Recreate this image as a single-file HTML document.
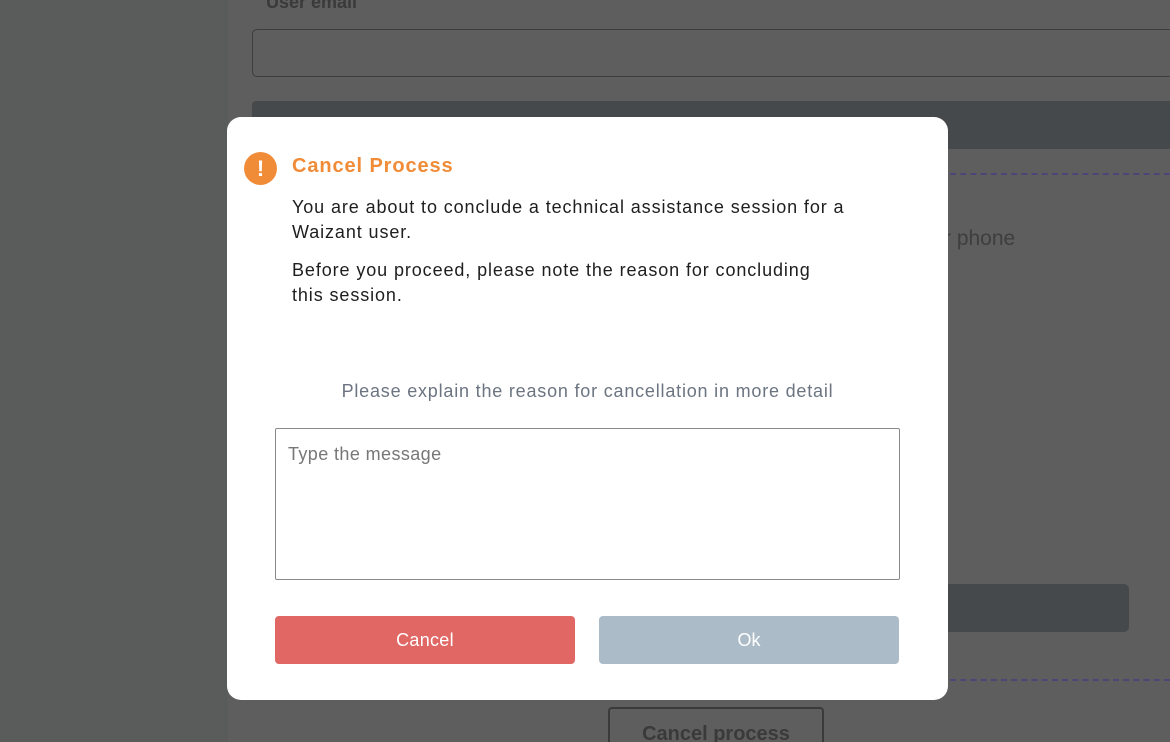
<!DOCTYPE html>
<html><head><meta charset="utf-8"><style>
*{margin:0;padding:0;box-sizing:border-box}
html,body{width:1170px;height:742px;overflow:hidden}
body{background:#5e5e5e;font-family:"Liberation Sans",sans-serif;position:relative}
.left{position:absolute;left:0;top:0;width:228px;height:742px;background:#5a5b5b}
.abs{position:absolute;white-space:nowrap}
.t{font-size:18px;letter-spacing:0.9px;line-height:25px;color:#1e1e1e}
</style></head><body>
<div class="left"></div>
<div class="abs" style="left:266px;top:-8px;font-size:18px;font-weight:bold;color:#3a3a3a">User email</div>
<div class="abs" style="left:252px;top:29px;width:940px;height:48px;border:1px solid #3d3d3d;border-radius:5px"></div>
<div class="abs" style="left:252px;top:101px;width:940px;height:48px;background:#46494b;border-radius:4px"></div>
<div class="abs" style="left:940px;top:173px;width:240px;border-top:2px dashed #4b4578"></div>
<div class="abs" style="left:944px;top:227px;font-size:21px;color:#3e3e3e">r phone</div>
<div class="abs" style="left:940px;top:584px;width:189px;height:48px;background:#46494b;border-radius:5px"></div>
<div class="abs" style="left:940px;top:679px;width:240px;border-top:2px dashed #4b4578"></div>
<div class="abs" style="left:608px;top:707px;width:216px;height:50px;border:2px solid #3a3a3a;border-radius:4px;font-size:20px;font-weight:bold;color:#3a3a3a;text-align:center;padding-top:14px">Cancel process</div>

<div class="abs" style="left:227px;top:117px;width:721px;height:583px;background:#fff;border-radius:14px">
  <div class="abs" style="left:17px;top:35px;width:33px;height:33px;border-radius:50%;background:#f08c38;color:#fff;font-weight:bold;font-size:22px;text-align:center;line-height:33px">!</div>
  <div class="abs" style="left:65px;top:38px;font-size:20px;letter-spacing:0.9px;font-weight:bold;color:#f08c38">Cancel Process</div>
  <div class="abs t" style="left:65px;top:78px">You are about to conclude a technical assistance session for a<br>Waizant user.</div>
  <div class="abs t" style="left:65px;top:141px">Before you proceed, please note the reason for concluding<br>this session.</div>
  <div class="abs" style="left:0;top:264px;width:721px;text-align:center;font-size:18px;letter-spacing:0.8px;color:#6b7480">Please explain the reason for cancellation in more detail</div>
  <div class="abs" style="left:48px;top:311px;width:625px;height:152px;border:1px solid #8a8a8a;border-radius:2px;padding:15px 12px;font-size:18px;letter-spacing:0.4px;color:#777">Type the message</div>
  <div class="abs" style="left:48px;top:499px;width:300px;height:48px;background:#e06763;border-radius:4px;color:#fff;font-size:18px;letter-spacing:0.3px;text-align:center;line-height:48px">Cancel</div>
  <div class="abs" style="left:372px;top:499px;width:300px;height:48px;background:#abbbc7;border-radius:4px;color:#fff;font-size:18px;text-align:center;line-height:48px">Ok</div>
</div>
</body></html>
